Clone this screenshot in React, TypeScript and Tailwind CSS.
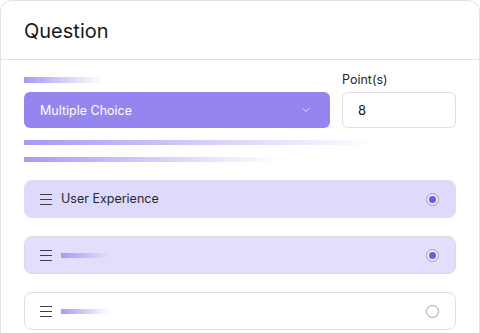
import { ChevronDown } from "lucide-react";

const fade = "bg-gradient-to-r from-[#a59bf5] to-transparent";

function Handle() {
  return (
    <div className="flex w-[12px] flex-col gap-[4px]">
      <span className="h-px w-full bg-[#3f3f46]" />
      <span className="h-px w-full bg-[#3f3f46]" />
      <span className="h-px w-full bg-[#3f3f46]" />
    </div>
  );
}

function Radio({ checked }: { checked?: boolean }) {
  return (
    <span className="flex h-[13px] w-[13px] items-center justify-center rounded-full border border-[#a1a1aa] bg-white/40">
      {checked && <span className="h-[7px] w-[7px] rounded-full bg-[#6d5bdc]" />}
    </span>
  );
}

function Option({
  label,
  barWidth,
  checked,
  variant,
}: {
  label?: string;
  barWidth?: string;
  checked?: boolean;
  variant: "active" | "soft" | "plain";
}) {
  const box =
    variant === "active"
      ? "border-[#dedafc] bg-[#dedafc]"
      : variant === "soft"
        ? "border-[#dcdae6] bg-[#e2defc]"
        : "border-[#e0e0e4] bg-white";
  return (
    <div className={`flex h-[38px] items-center rounded-lg border px-[15px] ${box}`}>
      <Handle />
      {label ? (
        <span className="ml-[9px] pt-px text-[12.5px] text-[#27272a]">{label}</span>
      ) : (
        <span className={`ml-[9px] h-[5px] ${barWidth} ${fade}`} />
      )}
      <span className="ml-auto mr-[1px]">
        <Radio checked={checked} />
      </span>
    </div>
  );
}

export default function App() {
  return (
    <div className="h-[333px] w-[480px] overflow-hidden bg-white font-['Inter',sans-serif]">
      <div className="h-[360px] rounded-t-xl border border-[#e2e2e6]">
        <div className="border-b border-[#e2e2e6] px-[23px] pt-[16px] pb-[14px]">
          <h1 className="text-[20px] leading-7 font-normal text-[#18181b]">Question</h1>
        </div>

        <div className="px-[23px] pt-3">
          <div className="flex gap-3">
            <div className="flex flex-1 flex-col gap-1">
              <div className="flex h-4 items-center">
                <span className={`h-[6px] w-[78px] ${fade}`} />
              </div>
              <div className="flex h-9 items-center justify-between rounded-md bg-[#9585ee] pl-4 pr-[18px]">
                <span className="pt-[3px] text-[12.5px] text-white">Multiple Choice</span>
                <ChevronDown className="h-3 w-3 text-white" strokeWidth={1.5} />
              </div>
            </div>
            <div className="flex w-[114px] flex-col gap-1">
              <span className="h-4 text-[12.5px] leading-4 text-[#27272a]">Point(s)</span>
              <div className="flex h-9 items-center rounded-md border border-[#e0e0e4] px-[15px] pt-[2px] text-[13px] text-[#18181b]">
                8
              </div>
            </div>
          </div>

          <div className="mt-3 flex flex-col gap-3">
            <span className={`h-[5px] w-[352px] ${fade}`} />
            <span className={`h-[5px] w-[256px] ${fade}`} />
          </div>

          <div className="mt-[18px] flex flex-col gap-[18px]">
            <Option variant="active" label="User Experience" checked />
            <Option variant="soft" barWidth="w-[48px]" checked />
            <Option variant="plain" barWidth="w-[48px]" />
          </div>
        </div>
      </div>
    </div>
  );
}
